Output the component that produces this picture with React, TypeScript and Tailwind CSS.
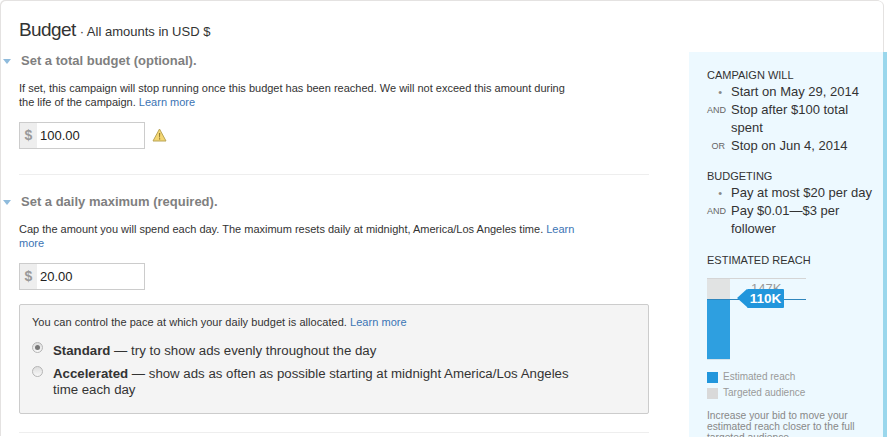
const LearnMore = () => <a className="text-[#3b74b4]">Learn more</a>;

const Caret = () => (
  <svg width="8" height="5" viewBox="0 0 8 5" className="absolute left-[-16px] top-[6px]">
    <path d="M0 0h8L4 5z" fill="#8fbbdc" />
  </svg>
);

const MoneyInput = ({ value }: { value: string }) => (
  <div className="flex h-[27px] w-[126px] border border-[#cccccc] bg-white">
    <div className="flex w-[17px] items-center justify-center bg-[#eeeeee] text-[14px] font-bold text-[#999999]">$</div>
    <div className="flex items-center pl-[3px] text-[13px] text-[#222222]">{value}</div>
  </div>
);

const SectionTitle = ({ children }: { children: string }) => (
  <div className="relative pl-[2px] text-[13px] leading-[16px] font-bold text-[#7f7f80]">
    <Caret />
    {children}
  </div>
);

const Radio = ({ checked }: { checked?: boolean }) => (
  <span className={checked ? "mt-[-1px] flex h-[11px] w-[11px] shrink-0 items-center justify-center rounded-full border border-[#b5b5b5] bg-gradient-to-b from-[#dddddd] to-[#f8f8f8]" : "mt-0 flex h-[11px] w-[11px] shrink-0 items-center justify-center rounded-full border border-[#b5b5b5] bg-gradient-to-b from-[#dddddd] to-[#f8f8f8]"}>
    {checked && <span className="h-[5px] w-[5px] rounded-full bg-[#777777]" />}
  </span>
);

const Row = ({ tag, children }: { tag: string; children: string }) => (
  <div className="flex">
    <span className={tag === "•" ? "w-[18px] shrink-0 pr-[3px] text-right text-[11px] leading-[18px] text-[#888888]" : "w-[18px] shrink-0 text-right text-[9px] leading-[18px] text-[#666666]"}>
      {tag}
    </span>
    <span className="pl-[6px]">{children}</span>
  </div>
);

export default function App() {
  return (
    <div className="h-[437px] w-[891px] overflow-hidden bg-white font-['Liberation_Sans',Arial,sans-serif]">
      <div className="ml-[1px] mt-[1px] flex h-[436px] w-[882px] rounded-t-[5px] shadow-[-1px_-1px_0_#e4e2e1,1px_0_0_#e4e2e1]">
        <div className="w-[688px] shrink-0 pl-[18px] pt-[17px]">
          <div className="flex items-baseline text-[#333333]">
            <span className="text-[19px] leading-[24px] tracking-[-0.6px]">Budget</span>
            <span className="ml-[4px] text-[13px]">· All amounts in USD $</span>
          </div>

          <div className="mt-[11px]">
            <SectionTitle>Set a total budget (optional).</SectionTitle>
          </div>
          <p className="mt-[12px] w-[560px] text-[11px] leading-[14px] text-[#333333]">
            If set, this campaign will stop running once this budget has been reached. We will not exceed this amount during the life of the campaign. <LearnMore />
          </p>
          <div className="mt-[13px] flex items-center">
            <MoneyInput value="100.00" />
            <svg width="15" height="14" viewBox="0 0 15 14" className="ml-[7px] mb-[2px]">
              <path d="M7.5 1 14 13H1z" fill="#f4d672" stroke="#b9a557" strokeLinejoin="round" />
              <path d="M7 5h1.2l-.2 4.5h-.8zM7 10.3h1.2v1.3H7z" fill="#8a7630" />
            </svg>
          </div>

          <div className="mt-[25px] h-px w-[630px] bg-[#eeeeee]" />

          <div className="mt-[19px]">
            <SectionTitle>Set a daily maximum (required).</SectionTitle>
          </div>
          <p className="mt-[12px] w-[560px] text-[11px] leading-[14px] text-[#333333]">
            Cap the amount you will spend each day. The maximum resets daily at midnight, America/Los Angeles time. <LearnMore />
          </p>
          <div className="mt-[13px]">
            <MoneyInput value="20.00" />
          </div>

          <div className="mt-[14px] h-[110px] w-[630px] rounded-[2px] border border-[#cccccc] bg-[#f4f4f4] pl-[12px] pt-[10px] text-[#333333]">
            <p className="text-[11px] tracking-[0.004em] leading-[14px]">
              You can control the pace at which your daily budget is allocated. <LearnMore />
            </p>
            <div className="mt-[14px] flex gap-[10px] text-[13.25px] leading-[16px]">
              <Radio checked />
              <p><b>Standard</b> — try to show ads evenly throughout the day</p>
            </div>
            <div className="mt-[7px] flex gap-[10px] text-[13.25px] leading-[16px]">
              <Radio />
              <p className="w-[530px]"><b>Accelerated</b> — show ads as often as possible starting at midnight America/Los Angeles time each day</p>
            </div>
          </div>

          <div className="mt-[18px] h-px w-[630px] bg-[#eeeeee]" />
        </div>

        <div className="mt-[51px] h-[385px] w-[198px] shrink-0 border-r-[4px] border-[#9ad7ec] bg-[#edf9ff] pl-[18px] pt-[16px] text-[13px] leading-[18px] text-[#333333]">
          <div className="text-[11px] leading-[14px]">CAMPAIGN WILL</div>
          <div className="mt-[1px] w-[170px]">
            <Row tag="•">Start on May 29, 2014</Row>
            <Row tag="AND">Stop after $100 total spent</Row>
            <Row tag="OR">Stop on Jun 4, 2014</Row>
          </div>
          <div className="mt-[14px] text-[11px] leading-[14px]">BUDGETING</div>
          <div className="mt-[1px] w-[170px]">
            <Row tag="•">Pay at most $20 per day</Row>
            <Row tag="AND">Pay $0.01—$3 per follower</Row>
          </div>
          <div className="mt-[15px] text-[11px] leading-[14px]">ESTIMATED REACH</div>

          <div className="relative mt-[11px] h-[82px] w-[99px] border-t border-[#d5d5d5]">
            <div className="h-[20px] w-[23px] bg-[#e1e3e3]" />
            <div className="h-[60px] w-[23px] bg-[#2e9fe0]" />
            <div className="h-px w-[23px] bg-[#d5e3ea]" />
            <div className="absolute left-[44px] top-[3px] text-[13px] leading-[14px] text-[#999999]">147K</div>
            <div className="absolute left-0 right-0 top-[20px] h-px bg-[#2f86bd]" />
            <div className="absolute left-[30px] top-[10px] h-0 w-0 border-y-[9px] border-r-[10px] border-y-transparent border-r-[#2196dc]" />
            <div className="absolute left-[40px] top-[10px] flex h-[19px] w-[37px] items-center justify-center rounded-[1px] bg-[#2196dc] text-[13.5px] font-bold text-white">110K</div>
          </div>

          <div className="mt-[9px] flex items-center gap-[5px] text-[10px] leading-[16px] text-[#999999]">
            <span className="h-[11px] w-[11px] bg-[#2196dc]" />
            Estimated reach
          </div>
          <div className="flex items-center gap-[5px] text-[10px] leading-[16px] text-[#999999]">
            <span className="h-[11px] w-[11px] bg-[#d9d9d9]" />
            Targeted audience
          </div>
          <p className="mt-[9px] w-[150px] text-[10.25px] leading-[11px] text-[#888888]">
            Increase your bid to move your estimated reach closer to the full targeted audience.
          </p>
        </div>
      </div>
    </div>
  );
}
